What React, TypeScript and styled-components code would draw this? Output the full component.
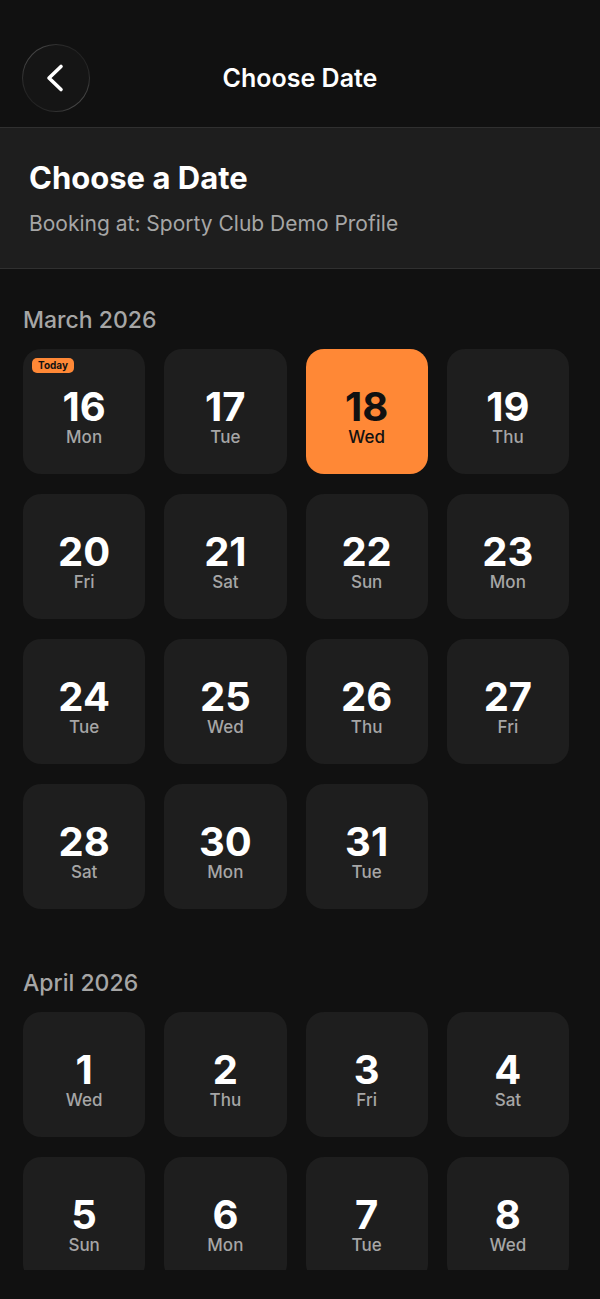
import { useState } from 'react';
import styled, { createGlobalStyle } from 'styled-components';

const GlobalStyle = createGlobalStyle`
  * {
    box-sizing: border-box;
  }

  body {
    margin: 0;
    background: #111111;
    color: #ffffff;
    font-family: Inter, 'Liberation Sans', sans-serif;
  }

  button {
    font-family: inherit;
    cursor: pointer;
  }
`;

const Screen = styled.div`
  display: flex;
  flex-direction: column;
  height: 100vh;
  padding-bottom: 29px;
`;

const Header = styled.header`
  flex: none;
  display: grid;
  grid-template-columns: 68px 1fr 68px;
  align-items: center;
  padding: 44px 22px 15px;
`;

const BackButton = styled.button`
  display: flex;
  align-items: center;
  justify-content: center;
  width: 68px;
  height: 68px;
  padding: 0;
  border: 1px solid transparent;
  border-radius: 50%;
  background: linear-gradient(#151515, #151515) padding-box,
    linear-gradient(45deg, #1c1c1c 10%, #444444 40%, #444444 60%, #1c1c1c 90%) border-box;
  color: #ffffff;
`;

const HeaderTitle = styled.div`
  font-size: 25px;
  line-height: 32px;
  font-weight: 600;
  text-align: center;
`;

const Banner = styled.section`
  flex: none;
  display: flex;
  flex-direction: column;
  gap: 10px;
  padding: 30px 29px 28px;
  border-top: 1px solid #303030;
  border-bottom: 1px solid #303030;
  background: #1e1e1e;
`;

const Title = styled.h1`
  margin: 0;
  font-size: 31px;
  line-height: 40px;
  font-weight: 700;
`;

const Subtitle = styled.p`
  margin: 0;
  color: #a6a6a6;
  font-size: 21px;
  line-height: 32px;
`;

const Months = styled.main`
  flex: 1;
  min-height: 0;
  display: flex;
  flex-direction: column;
  gap: 60px;
  padding: 37px 31px 0 23px;
  overflow-y: auto;
  scrollbar-width: none;
`;

const Month = styled.section`
  display: flex;
  flex-direction: column;
  gap: 15px;
`;

const MonthName = styled.h2`
  margin: 0;
  color: #a6a6a6;
  font-size: 23px;
  line-height: 28px;
  font-weight: 500;
`;

const Days = styled.div`
  display: grid;
  grid-template-columns: repeat(4, 1fr);
  gap: 20px 19px;
`;

const DayCard = styled.button<{ $selected: boolean }>`
  position: relative;
  display: flex;
  flex-direction: column;
  align-items: center;
  padding: 38px 0 27px;
  border: 0;
  border-radius: 18px;
  background: ${({ $selected }) => ($selected ? '#ff8836' : '#1e1e1e')};
  color: ${({ $selected }) => ($selected ? '#111111' : '#ffffff')};
`;

const DayNumber = styled.span`
  font-size: 40px;
  line-height: 40px;
  font-weight: 700;
`;

const DayName = styled.span<{ $selected: boolean }>`
  color: ${({ $selected }) => ($selected ? '#111111' : '#a6a6a6')};
  font-size: 17px;
  line-height: 20px;
  font-weight: 500;
`;

const TodayBadge = styled.span`
  position: absolute;
  top: 9px;
  left: 9px;
  padding: 0 6px;
  border-radius: 5px;
  background: #ff8836;
  color: #111111;
  font-size: 10px;
  line-height: 15px;
  font-weight: 700;
`;

const weekdays = ['Sun', 'Mon', 'Tue', 'Wed', 'Thu', 'Fri', 'Sat'];

// firstWeekday is the weekday index of the 1st of the month
const months = [
  {
    name: 'March 2026',
    firstWeekday: 0,
    days: [16, 17, 18, 19, 20, 21, 22, 23, 24, 25, 26, 27, 28, 30, 31],
  },
  {
    name: 'April 2026',
    firstWeekday: 3,
    days: [1, 2, 3, 4, 5, 6, 7, 8],
  },
];

const today = 'March 2026-16';

const App = () => {
  const [selected, setSelected] = useState('March 2026-18');

  return (
    <Screen>
      <GlobalStyle />
      <Header>
        <BackButton type="button" aria-label="Back">
          <svg width="28" height="32" viewBox="0 0 28 32" fill="none">
            <path
              d="M19 4.5 L7 16 L19 27.5"
              stroke="currentColor"
              strokeWidth="3.6"
              strokeLinecap="round"
              strokeLinejoin="round"
            />
          </svg>
        </BackButton>
        <HeaderTitle>Choose Date</HeaderTitle>
      </Header>

      <Banner>
        <Title>Choose a Date</Title>
        <Subtitle>Booking at: Sporty Club Demo Profile</Subtitle>
      </Banner>

      <Months>
        {months.map((month) => (
          <Month key={month.name}>
            <MonthName>{month.name}</MonthName>
            <Days>
              {month.days.map((day) => {
                const id = `${month.name}-${day}`;
                const isSelected = id === selected;
                return (
                  <DayCard
                    key={id}
                    type="button"
                    aria-pressed={isSelected}
                    $selected={isSelected}
                    onClick={() => setSelected(id)}
                  >
                    {id === today && <TodayBadge>Today</TodayBadge>}
                    <DayNumber>{day}</DayNumber>
                    <DayName $selected={isSelected}>
                      {weekdays[(month.firstWeekday + day - 1) % 7]}
                    </DayName>
                  </DayCard>
                );
              })}
            </Days>
          </Month>
        ))}
      </Months>
    </Screen>
  );
};

export default App;
